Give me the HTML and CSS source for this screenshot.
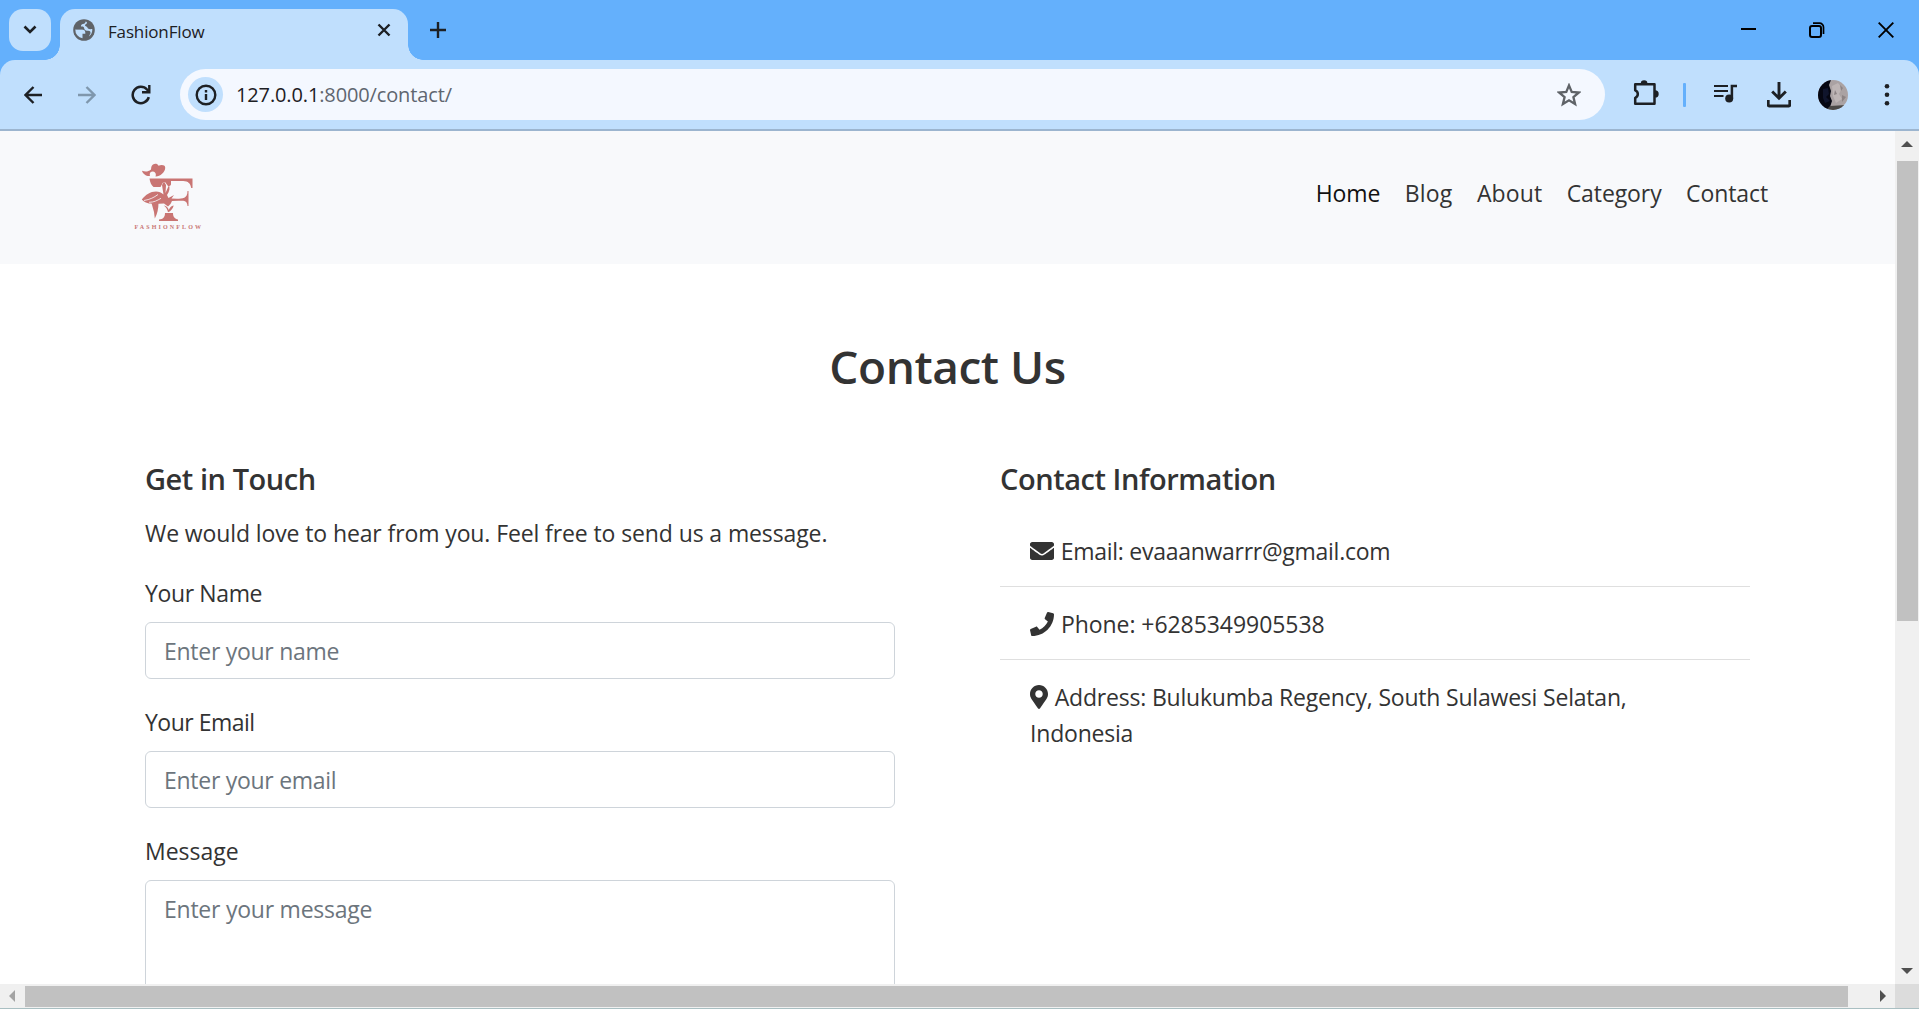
FILE: index.html
```
<!DOCTYPE html>
<html lang="en">
<head>
<meta charset="utf-8">
<title>FashionFlow</title>
<link rel="stylesheet" href="styles.css">
</head>
<body>
<div class="browser">
  <div class="tabstrip">
    <div class="tab-search"><svg width="14" height="10" viewBox="0 0 14 10"><path d="M1.500 1.500 7 7l5.500-5.500" fill="none" stroke="#1d2024" stroke-width="2.600"/></svg></div>
    <div class="tab">
      <svg class="globe" width="22" height="22" viewBox="0 0 22 22"><circle cx="11" cy="11" r="10.800" fill="#5f6368"/><path d="M2.300 10.500H9c2 0 3.300 1 3.300 3v1.200H9.500v4.500A8.500 8.500 0 0 1 2.300 10.500z" fill="#c0dffd"/><path d="M12.500 2.500c-.2 1.800-1 2.500-2.700 2.600-1.500.1-2 .6-1.900 2h3.500c.3 2.300 1.300 3.700 3.600 3.800 1.700 0 3-.6 4.500-.4a8.500 8.500 0 0 1-5.200 8.200c.6-1.700.5-3-.8-4.300l.2-1.600c-1-2-2.800-2.600-5.200-2.600H3.200L4 6.500z" fill="#5f6368"/><path d="M12.600 2.600c-.2 1.600-1 2.400-2.600 2.500-1.300.1-2 .8-2 2.400 2.200-.3 3 .3 3.200 1.900.2 1.800 1.800 2.300 4 2.300 1.500 0 2.600.8 2.300 2.500l-1.700 3.300a8.500 8.500 0 0 0 3.500-7.500c-1.700.2-3.500.3-4.300-.6-1-1.100-.5-1.600-2.200-2.100-1.200-.4-1-1.800.3-2.300.8-.4.9-1.200.7-2.100z" fill="#c0dffd"/></svg>
      <span class="tab-title">FashionFlow</span>
      <svg class="tab-close" width="14" height="14" viewBox="0 0 14 14"><path d="M1.500 1.500l11 11M12.500 1.500l-11 11" stroke="#1d2024" stroke-width="2.400"/></svg>
    </div>
    <svg class="new-tab" width="16" height="16" viewBox="0 0 16 16"><path d="M8 0v16M0 8h16" stroke="#1d2024" stroke-width="2.400"/></svg>
    <div class="window-buttons">
      <svg width="16" height="16" viewBox="0 0 16 16"><path d="M1 7h15" stroke="#000" stroke-width="2"/></svg>
      <svg width="16" height="16" viewBox="0 0 16 16"><rect x="1" y="4" width="11" height="11" rx="2" fill="none" stroke="#000" stroke-width="2"/><path d="M4 1.200h6.500a4 4 0 0 1 4 4V12" fill="none" stroke="#000" stroke-width="1.700"/></svg>
      <svg width="16" height="16" viewBox="0 0 16 16"><path d="M.7.700l14.600 14.600M15.300.700.7 15.300" stroke="#000" stroke-width="1.900"/></svg>
    </div>
  </div>
  <div class="toolbar">
    <svg class="back" width="18" height="18" viewBox="0 0 18 18"><path d="M18 9H2M9.500 1 1.500 9l8 8" fill="none" stroke="#1d2024" stroke-width="2.400"/></svg>
    <svg class="forward" width="18" height="18" viewBox="0 0 18 18"><path d="M0 9h16M8.500 1l8 8-8 8" fill="none" stroke="#7f97ad" stroke-width="2.400"/></svg>
    <svg class="reload" width="20" height="20" viewBox="0 0 20 20"><path d="M17.800 12.200A8.200 8.200 0 1 1 16 4.500l1.500 1.700" fill="none" stroke="#1d2024" stroke-width="2.500"/><path d="M18.300 0v7.300H11" fill="none" stroke="#1d2024" stroke-width="2.400"/></svg>
    <div class="omnibox">
      <span class="site-info"><svg width="22" height="22" viewBox="0 0 22 22"><circle cx="11" cy="11" r="9.300" fill="none" stroke="#1d2024" stroke-width="2.400"/><path d="M11 10v6M11 6v2.400" stroke="#1d2024" stroke-width="2.400"/></svg></span>
      <span class="url">127.0.0.1<span class="url-rest">:8000/contact/</span></span>
      <svg class="star" width="24" height="24" viewBox="0 0 24 24"><path d="M12 2.400l2.700 6.500 7.100.6-5.400 4.600 1.700 6.900-6.100-3.700L5.900 21l1.700-6.900-5.400-4.600 7.100-.6z" fill="none" stroke="#5f6368" stroke-width="2.300"/></svg>
    </div>
    <svg class="puzzle" width="26" height="26" viewBox="0 0 26 26"><path d="M2.200 4.300h19.300v19.500H2.200v-6a4 4 0 0 0 0-7.500z" fill="none" stroke="#1d2024" stroke-width="2.500" stroke-linejoin="round"/><path d="M7.800 3.500a3.300 3.300 0 0 1 6.600 0zM22 10.200a3.700 3.700 0 0 1 0 7.400z" fill="#1d2024"/></svg>
    <span class="divider"></span>
    <svg class="music" width="24" height="20" viewBox="0 0 24 20"><path d="M0 2h14M0 7h14M0 12h9.500" stroke="#1d2024" stroke-width="2.200"/><circle cx="15.200" cy="14.500" r="4" fill="#1d2024"/><path d="M17.900 14.500V2H23" fill="none" stroke="#1d2024" stroke-width="2.500"/></svg>
    <svg class="download" width="24" height="26" viewBox="0 0 24 26"><path d="M12 0v16M5.200 9.500 12 16.300l6.800-6.800M1.200 18v5a1 1 0 0 0 1 1h19.600a1 1 0 0 0 1-1v-5" fill="none" stroke="#1d2024" stroke-width="2.900"/></svg>
    <svg class="avatar" width="30" height="30" viewBox="0 0 30 30"><defs><clipPath id="face"><circle cx="15" cy="15" r="15"/></clipPath></defs><g clip-path="url(#face)"><path fill="#aaa2a3" d="M0 0h30v30H0z"/><path fill="#060712" d="M0 0h13l-2 5 2 6-1 5 2 5-3 9H0z"/><path fill="#10152c" d="M5 9l5-1 1 6-3 3 4 4-5 2-2-5z"/><path fill="#bdb5b5" d="M14 6l6-3 4 5-3 6 3 5-6 4-3-7z"/><path fill="#8c8384" d="M22 5l3 3-2 3zM24 15l4 2-4 5zM17 10l2 4-3 1z"/><path fill="#4b4947" d="M8 30l4-4 16-1v5z"/></g></svg>
    <svg class="menu" width="6" height="24" viewBox="0 0 6 24"><g fill="#1d2024"><circle cx="3" cy="3.200" r="2.300"/><circle cx="3" cy="11.800" r="2.300"/><circle cx="3" cy="20.200" r="2.300"/></g></svg>
  </div>
  <div class="viewport">
    <div class="page">
      <header class="site-header">
        <svg class="logo" width="68" height="68" viewBox="0 0 68 68">
          <g fill="#c97573">
            <path d="M8 7.800c3.500 1.200 6 1 9-1.300l.3-2.500C18.500.5 23-.3 24.500 2.800c3-1.300 6.500-.8 6.700 1.700.3 5-5.500 9.300-9.700 9 1-2.300-.2-5-2.800-5-2.300 0-3.500 2-2.700 4.500C12.500 13.500 9 11.300 8 7.800z"/>
            <path d="M15.500 15.500h43V25h-1.300c-.7-4.500-3-6.800-8-7H37v3c0 1.500-1 2-3 2l-3-4-2 .5-2.500 4.500h-7c-2-1.500-3.500-4.500-4-8.500z"/>
            <path d="M28 22l2-3.500 2 3.500-.5 8 3.500-8c1 3 .7 6-2 10l1.500 3 5.500-3-2.500 3.500 5.500.2c5.500-.2 10.500.2 10.500-7.700h1v15h-1c-.5-6-4-5.200-9-5.300l-6.500.2-1.500 3-2.500 2.500-4-3C20 41 13 42 7.800 36.500c4-5 8.500-8 14.200-8 2.800 0 5.500 1 7.500 3z"/>
            <path d="M17.500 40c2.500.7 5 .5 7-.3 0 6-1.200 11.300-3.700 15.800L20 49z"/>
            <path d="M31 50h8c0 4 2 6 5 6.500V58H25v-1.500c4-.2 6-2.500 6-6.500zM34 49.300c-.6-3-2-5-4.300-6.700 3 .4 4.300 2.200 5 4.400 1-2.500 2.500-4 5-4.600-.8 3-2.700 5.500-5.700 6.900z"/>
          </g>
          <path d="M10 37.500c6-1 10-3 14-6M15 39.300c5 0 8-1.700 12-4" fill="none" stroke="#f8f9fb" stroke-width=".8"/>
          <text x=".5" y="65.600" textLength="66.500" class="logo-text">FASHIONFLOW</text>
        </svg>
        <nav class="nav">
          <a class="active">Home</a><a class="blog">Blog</a><a class="about">About</a><a class="category">Category</a><a>Contact</a>
        </nav>
      </header>
      <main class="content">
        <h1>Contact Us</h1>
        <div class="columns">
          <section>
            <h2>Get in Touch</h2>
            <p class="intro">We would love to hear from you. Feel free to send us a message.</p>
            <div class="field"><label class="tight" for="name">Your Name</label><input id="name" placeholder="Enter your name"></div>
            <div class="field"><label class="tighter" for="email">Your Email</label><input id="email" placeholder="Enter your email"></div>
            <div class="field"><label for="message">Message</label><textarea id="message" placeholder="Enter your message"></textarea></div>
          </section>
          <section>
            <h2>Contact Information</h2>
            <ul class="info">
              <li class="mail"><svg width="24" height="24" viewBox="0 0 512 512"><path fill="#333" d="M502.300 190.800c3.900-3.100 9.700-.2 9.700 4.700V400c0 26.500-21.500 48-48 48H48c-26.500 0-48-21.500-48-48V195.600c0-5 5.700-7.800 9.700-4.700 22.400 17.400 52.100 39.500 154.100 113.600 21.100 15.400 56.700 47.800 92.200 47.600 35.700.3 72-32.800 92.300-47.600 102-74.100 131.600-96.300 154-113.700zM256 320c23.200.4 56.600-29.200 73.400-41.400 132.700-96.300 142.800-104.700 173.400-128.700 5.800-4.500 9.200-11.500 9.200-18.900v-19c0-26.500-21.500-48-48-48H48c-26.500 0-48 21.500-48 48v19c0 7.400 3.400 14.300 9.200 18.900 30.600 23.900 40.700 32.400 173.400 128.700 16.800 12.200 50.200 41.800 73.400 41.400z"/></svg> Email: evaaanwarrr@gmail.com</li>
              <li class="phone"><svg width="24" height="24" viewBox="0 0 512 512"><path fill="#333" d="M493.400 24.600l-104-24c-11.300-2.600-22.900 3.300-27.500 13.900l-48 112c-4.200 9.800-1.400 21.300 6.900 28l60.600 49.600c-36 76.700-98.900 140.500-177.200 177.200l-49.600-60.600c-6.800-8.300-18.200-11.100-28-6.900l-112 48C3.900 366.500-2 378.100.6 389.400l24 104C27.100 504.200 36.700 512 48 512c256.100 0 464-207.500 464-464 0-11.200-7.700-20.900-18.600-23.400z"/></svg> Phone: +6285349905538</li>
              <li class="address"><svg width="18" height="24" viewBox="0 0 384 512"><path fill="#333" d="M172.268 501.670C26.970 291.031 0 269.413 0 192 0 85.961 85.961 0 192 0s192 85.961 192 192c0 77.413-26.970 99.031-172.268 309.670-9.535 13.774-29.930 13.773-39.464 0zM192 272c44.183 0 80-35.817 80-80s-35.817-80-80-80-80 35.817-80 80 35.817 80 80 80z"/></svg> Address: Bulukumba Regency, South Sulawesi Selatan, Indonesia</li>
            </ul>
          </section>
        </div>
      </main>
    </div>
    <div class="vbar"><i class="arrow up"></i><i class="vthumb"></i><i class="arrow down"></i></div>
    <div class="hbar"><i class="arrow left"></i><i class="hthumb"></i><i class="arrow right"></i></div>
    <div class="corner"></div>
  </div>
</div>
</body>
</html>
```
FILE: styles.css
```
* { box-sizing: border-box; }
body { margin: 0; font-family: "Open Sans", "Noto Sans", sans-serif; color: #333; overflow: hidden; }
svg { display: block; flex: none; }
.browser { width: 1919px; height: 1009px; display: flex; flex-direction: column; background: #64b0fc; border-bottom: 1px solid #a9bfc2; }

.tabstrip { height: 60px; flex: none; display: flex; align-items: center; padding-left: 9px; }
.tab-search { width: 42px; height: 42px; border-radius: 14px; background: #c0dffd; display: flex; align-items: center; justify-content: center; }
.tab { position: relative; width: 348px; height: 51px; margin: 9px 0 0 9px; padding: 0 17px 9px 13px; border-radius: 15px 15px 0 0; background: #c0dffd; display: flex; align-items: center; }
.tab::before, .tab::after { content: ""; position: absolute; bottom: 0; width: 15px; height: 15px; }
.tab::before { left: -15px; background: radial-gradient(circle at 0 0, transparent 14.500px, #c0dffd 15px); }
.tab::after { right: -15px; background: radial-gradient(circle at 100% 0, transparent 14.500px, #c0dffd 15px); }
.tab-title { flex: 1; margin: 2px 0 0 13px; font-size: 17px; letter-spacing: -.15px; color: #1d2024; }
.new-tab { margin-left: 22px; }
.window-buttons { margin-left: auto; display: flex; gap: 53px; padding-right: 25px; }

.toolbar { height: 71px; flex: none; display: flex; align-items: center; padding-left: 24px; background: #c0dffd; border-radius: 15px 15px 0 0; border-bottom: 2px solid #9cb5cf; }
.forward { margin-left: 36px; }
.reload { margin-left: 35px; }
.omnibox { width: 1425px; height: 51px; margin-left: 29px; padding: 0 24px 0 8px; border-radius: 26px; background: #f4f8ff; display: flex; align-items: center; }
.site-info { width: 35px; height: 35px; border-radius: 50%; background: #c0dffd; display: flex; align-items: center; justify-content: center; }
.url { flex: 1; margin-left: 13px; font-size: 20px; letter-spacing: -.13px; color: #1d2024; }
.url-rest { color: #5f6670; }
.puzzle { margin: 0 0 4px 28px; }
.divider { width: 3px; height: 24px; margin-left: 24px; border-radius: 1px; background: #64b0fc; }
.music { margin: 0 0 2px 28px; }
.download { margin-left: 29px; }
.avatar { margin-left: 27px; }
.menu { margin-left: 36px; }

.viewport { height: 877px; flex: none; display: grid; grid-template: 853px 24px / 1895px 24px; }
.page { overflow: hidden; background: #fff; }
.site-header { height: 133px; display: flex; align-items: center; justify-content: space-between; padding: 0 127px 0 134px; background: #f8f9fb; }
.logo { margin-bottom: 2px; }
.logo-text { font: bold 6px "Liberation Serif", serif; fill: #c97573; }
.nav { display: flex; gap: 24.500px; margin-bottom: 10px; font-size: 23px; line-height: 36px; letter-spacing: -.1px; }
.nav .active { color: #111; letter-spacing: -.13px; }
.nav .blog { letter-spacing: .2px; }
.nav .about { letter-spacing: .1px; }
.nav .category { letter-spacing: -.1px; }

.content { padding: 73px 145px 0; }
h1 { margin: 0; text-align: center; font-size: 46px; line-height: 58px; font-weight: 600; letter-spacing: -.45px; }
.columns { display: grid; grid-template-columns: 750px 750px; column-gap: 105px; margin-top: 66px; font-size: 23px; line-height: 36px; }
h2 { margin: 0 0 18px; font-size: 29px; line-height: 36px; font-weight: 600; letter-spacing: -.45px; }
.intro { margin: 0 0 24px; letter-spacing: -.11px; }
.field { margin-bottom: 25px; }
label { display: block; margin-bottom: 11px; }
.tight { letter-spacing: -.37px; }
.tighter { letter-spacing: -.5px; }
input, textarea { display: block; width: 750px; height: 57px; padding: 9px 18px; border: 1px solid #ced4da; border-radius: 6px; background: #fff; font: inherit; letter-spacing: -.28px; resize: none; overflow: hidden; }
textarea { height: 180px; padding-top: 10px; letter-spacing: -.24px; }
::placeholder { color: #6c757d; opacity: 1; }
.info { margin: -1px 0 0; padding: 0; list-style: none; }
.info li { padding: 19px 30px 17px; border-bottom: 1px solid #dfdfdf; letter-spacing: -.27px; }
.info li:last-child { border: 0; }
.info svg { display: inline-block; vertical-align: -3px; margin-right: 1px; }
.info .phone { letter-spacing: -.06px; }
.info .address { letter-spacing: -.2px; }

.vbar, .hbar { background: #f0f0f0; display: flex; align-items: center; }
.vbar { flex-direction: column; padding: 10px 0; }
.hbar { padding: 0 9px; }
.corner { background: #dcdcdc; }
.arrow { flex: none; width: 0; height: 0; border: 6px solid transparent; }
.up { border-width: 0 6px 6px; border-bottom-color: #505050; }
.down { border-width: 6px 6px 0; border-top-color: #505050; margin-top: auto; }
.left { border-width: 6px 6px 6px 0; border-right-color: #a3a3a3; }
.right { border-width: 6px 0 6px 6px; border-left-color: #505050; margin-left: auto; }
.vthumb { width: 21px; height: 460px; margin: 14px 0 0 1px; background: #c1c1c1; }
.hthumb { width: 1823px; height: 21px; margin: 1px 0 0 10px; background: #c1c1c1; }
```
